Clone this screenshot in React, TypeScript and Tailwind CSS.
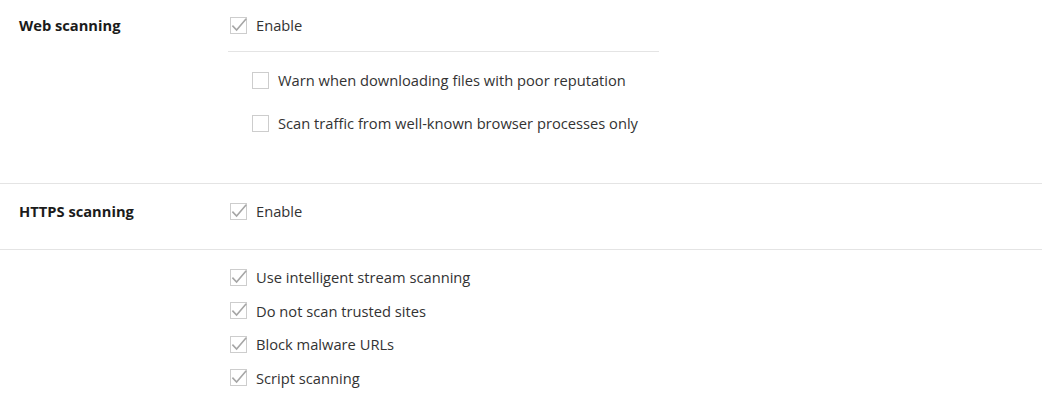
import { type ReactNode } from 'react'

function Box({ checked }: { checked: boolean }) {
  return (
    <span className="relative h-[17px] w-[17px] shrink-0 border border-[#cdcdcd] bg-white">
      {checked && (
        <svg className="absolute -left-px -top-px overflow-visible" width="17" height="17" viewBox="0 0 17 17" fill="none" aria-hidden="true">
          <path d="M2.4 8.6 L6.6 13 L16.2 1.8" stroke="#a6a6a6" strokeWidth="1.6" />
        </svg>
      )}
    </span>
  )
}

function Option({ checked, children, className = '' }: { checked: boolean; children: ReactNode; className?: string }) {
  return (
    <label className={`flex h-[20px] items-center gap-[9px] text-[14.7px] leading-[20px] text-[#333] ${className}`}>
      <Box checked={checked} />
      <span>{children}</span>
    </label>
  )
}

function Label({ children }: { children: ReactNode }) {
  return <div className="w-[230px] shrink-0 pl-[19px] text-[14.7px] font-bold leading-[20px] text-[#1b1b1b]">{children}</div>
}

export default function App() {
  return (
    <div className="h-[413px] w-[1042px] overflow-hidden bg-white font-['Open_Sans',sans-serif]">
      {/* web scanning */}
      <section className="h-[184px] border-b border-[#e4e4e4] pt-[15px]">
        <div className="flex items-center">
          <Label>Web scanning</Label>
          <Option checked>Enable</Option>
        </div>
        <div className="ml-[228px] mt-[16px] w-[431px] border-t border-[#e4e4e4]" />
        <div className="ml-[252px] mt-[18px] flex flex-col gap-[23px]">
          <Option checked={false}>Warn when downloading files with poor reputation</Option>
          <Option checked={false}>Scan traffic from well-known browser processes only</Option>
        </div>
      </section>

      {/* https scanning */}
      <section className="flex h-[66px] items-start border-b border-[#e4e4e4] pt-[17px]">
        <Label>HTTPS scanning</Label>
        <Option checked>Enable</Option>
      </section>

      <section className="ml-[230px] flex flex-col gap-[13.5px] pt-[17px]">
        <Option checked>Use intelligent stream scanning</Option>
        <Option checked>Do not scan trusted sites</Option>
        <Option checked>Block malware URLs</Option>
        <Option checked>Script scanning</Option>
      </section>
    </div>
  )
}
